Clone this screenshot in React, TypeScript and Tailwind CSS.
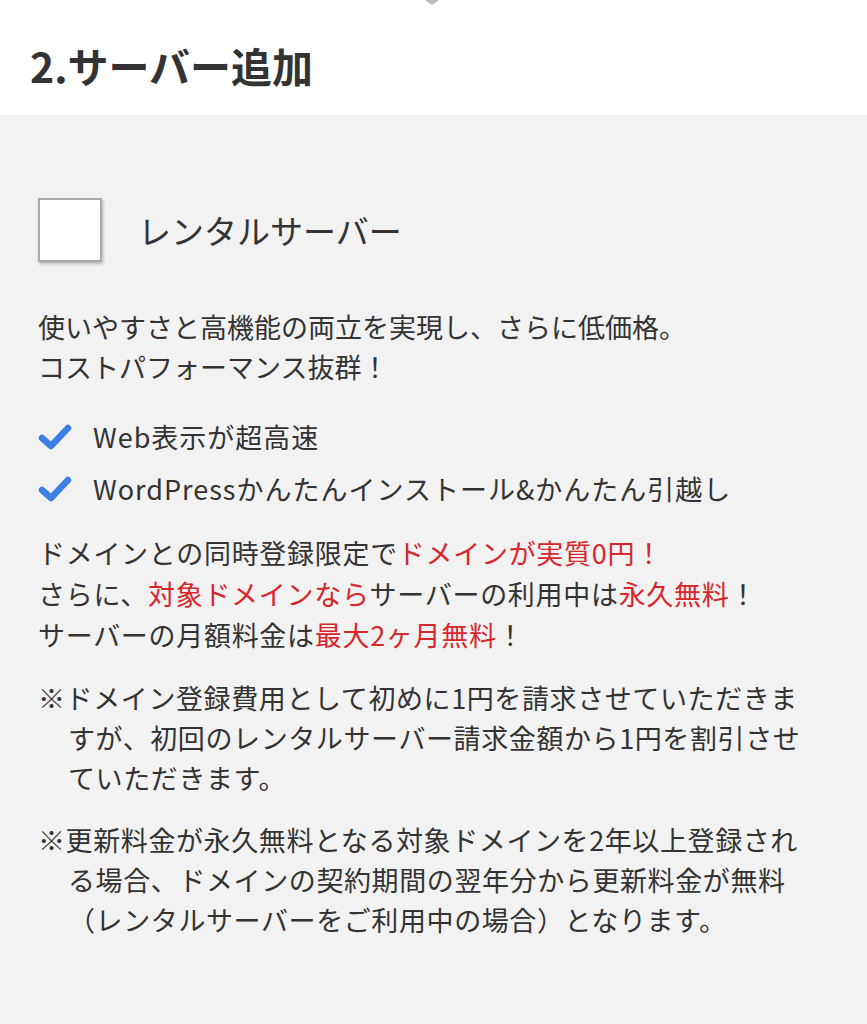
import React from 'react';

const font = { fontFamily: '"Noto Sans CJK JP", "Noto Sans", sans-serif' };

function Check() {
  return (
    <svg width="34" height="28" viewBox="0 0 34 28" className="shrink-0">
      <path d="M4 15 L13 23 L30 5" fill="none" stroke="#3d7fe6" strokeWidth="6.5" strokeLinecap="round" strokeLinejoin="round" />
    </svg>
  );
}

function Red({ children }: { children: React.ReactNode }) {
  return <span className="text-[#d7262c]">{children}</span>;
}

export default function App() {
  return (
    <div className="min-h-[1024px] bg-[#f2f2f2] text-[#333]" style={font}>
      <header className="relative h-[115px] bg-white pl-[30px] pt-[42px]">
        <svg width="14" height="6" viewBox="0 0 14 6" className="absolute left-[425px] top-0">
          <path d="M0 0 L7 5 L14 0 Z" fill="#bdbdbd" />
        </svg>
        <h1 className="text-[41px] font-bold leading-[46px] text-[#333]">2.サーバー追加</h1>
      </header>

      <section className="px-[38px] pt-[83px] text-[27px] leading-[40px]">
        <label className="flex items-center">
          <span className="h-16 w-16 shrink-0 border-2 border-[#aaa] bg-white shadow-[1px_2px_3px_rgba(0,0,0,0.25)]" />
          <span className="ml-[36px] text-[33px] leading-[40px] text-[#333]">レンタルサーバー</span>
        </label>

        <p className="mt-[45px]">
          使いやすさと高機能の両立を実現し、さらに低価格。<br />
          コストパフォーマンス抜群！
        </p>

        <ul className="mt-[30px] flex flex-col gap-[12px] tracking-[1px]">
          <li className="flex items-center">
            <Check />
            <span className="ml-[21px]">Web表示が超高速</span>
          </li>
          <li className="flex items-center">
            <Check />
            <span className="ml-[21px]">WordPressかんたんインストール&amp;かんたん引越し</span>
          </li>
        </ul>

        <p className="mt-[23px] whitespace-nowrap leading-[41px] tracking-[0.7px]">
          ドメインとの同時登録限定で<Red>ドメインが実質0円！</Red><br />
          さらに、<Red>対象ドメインなら</Red>サーバーの利用中は<Red>永久無料</Red>！<br />
          サーバーの月額料金は<Red>最大2ヶ月無料</Red>！
        </p>

        <p className="mt-[23px] whitespace-nowrap pl-[30px] -indent-[30px] tracking-[0.6px]">
          ※ドメイン登録費用として初めに1円を請求させていただきま<br />
          すが、初回のレンタルサーバー請求金額から1円を割引させ<br />
          ていただきます。
        </p>

        <p className="mt-[22px] whitespace-nowrap pl-[30px] -indent-[30px] tracking-[0.6px]">
          ※更新料金が永久無料となる対象ドメインを2年以上登録され<br />
          る場合、ドメインの契約期間の翌年分から更新料金が無料<br />
          （レンタルサーバーをご利用中の場合）となります。
        </p>
      </section>
    </div>
  );
}
